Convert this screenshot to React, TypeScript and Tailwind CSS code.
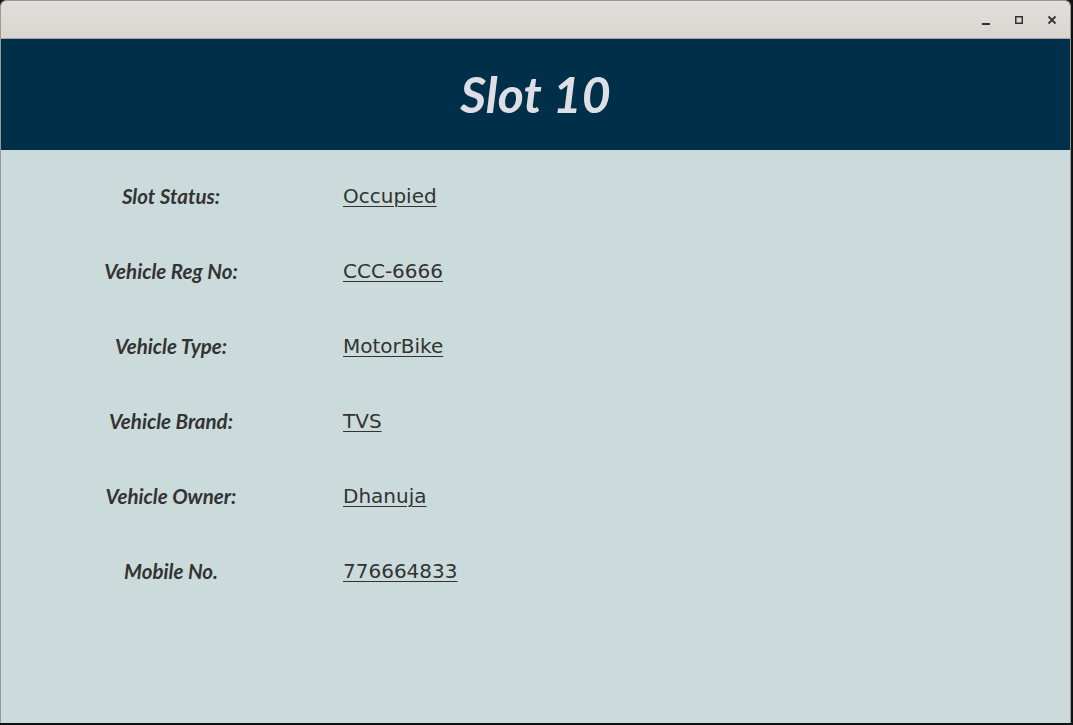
import React from "react";

const rows: [string, string][] = [
  ["Slot Status:", "Occupied"],
  ["Vehicle Reg No:", "CCC-6666"],
  ["Vehicle Type:", "MotorBike"],
  ["Vehicle Brand:", "TVS"],
  ["Vehicle Owner:", "Dhanuja"],
  ["Mobile No.", "776664833"],
];

export default function App() {
  return (
    <div className="w-[1073px] h-[725px] bg-[#111] flex flex-col overflow-hidden">
      <div className="w-[1071px] h-[723px] flex flex-col rounded-t-[6px] overflow-hidden border border-[#9a9a9a] border-b-0">
        <div className="h-[38px] shrink-0 bg-gradient-to-b from-[#e2dfdb] to-[#d9d5d1] border-b border-[#a8a49f] flex items-center justify-end pr-[12px] gap-[21px]">
          <svg width="12" height="12" viewBox="0 0 12 12">
            <rect x="2" y="9" width="8" height="2" fill="#2e3436" />
          </svg>
          <svg width="12" height="12" viewBox="0 0 12 12">
            <rect x="2.75" y="2.75" width="6.5" height="6.5" fill="none" stroke="#2e3436" strokeWidth="1.5" />
          </svg>
          <svg width="12" height="12" viewBox="0 0 12 12">
            <path d="M2.5 2.5 L9.5 9.5 M9.5 2.5 L2.5 9.5" stroke="#2e3436" strokeWidth="1.8" />
          </svg>
        </div>
        <div className="h-[111px] shrink-0 bg-[#003049] flex items-center justify-center">
          <h1
            className="text-[#dedfe6] italic font-bold text-[50px] leading-none pb-[1px]"
            style={{ fontFamily: "Lato, sans-serif" }}
          >
            Slot 10
          </h1>
        </div>
        <div className="flex-1 bg-[#cbdbdb] pt-[31px]">
          <div className="flex flex-col gap-[45px]">
            {rows.map(([label, value]) => (
              <div key={label} className="flex items-center h-[30px]">
                <div
                  className="w-[340px] text-center italic font-bold text-[20.5px] text-[#333]"
                  style={{ fontFamily: "Lato, sans-serif" }}
                >
                  {label}
                </div>
                <div
                  className="pl-[2px] text-[20px] text-[#333] underline underline-offset-[3px] decoration-[1px]"
                  style={{ fontFamily: "'DejaVu Sans', sans-serif" }}
                >
                  {value}
                </div>
              </div>
            ))}
          </div>
        </div>
      </div>
    </div>
  );
}
